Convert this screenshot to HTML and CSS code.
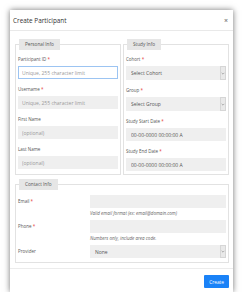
FILE: index.html
```html
<!DOCTYPE html>
<html lang="en">
<head>
  <meta charset="UTF-8" />
  <meta name="viewport" content="width=device-width, initial-scale=1" />
  <title>Create Participant</title>
  <link rel="stylesheet" href="styles.css">
</head>
<body>

<div class="modal">
  <div class="modal-header">
    <span class="modal-title">Create Participant</span>
    <span class="close">&times;</span>
  </div>

  <div class="modal-body">
    <div class="columns">
      <fieldset>
        <legend>Personal Info</legend>
        <div class="group">
          <label>Participant ID <span class="req">*</span></label>
          <input type="text" class="focused" placeholder="Unique, 255 character limit">
        </div>
        <div class="group">
          <label>Username <span class="req">*</span></label>
          <input type="text" placeholder="Unique, 255 character limit">
        </div>
        <div class="group">
          <label>First Name</label>
          <input type="text" placeholder="(optional)">
        </div>
        <div class="group">
          <label>Last Name</label>
          <input type="text" placeholder="(optional)">
        </div>
      </fieldset>

      <fieldset>
        <legend>Study Info</legend>
        <div class="group">
          <label>Cohort <span class="req">*</span></label>
          <div class="select wide">
            <select><option>Select Cohort</option></select>
            <span class="arrow"><svg viewBox="0 0 6 4" width="4" height="3"><path d="M1 1l2 2 2-2" fill="none" stroke="#777" stroke-width="0.8"/></svg></span>
          </div>
        </div>
        <div class="group">
          <label>Group <span class="req">*</span></label>
          <div class="select wide">
            <select><option>Select Group</option></select>
            <span class="arrow"><svg viewBox="0 0 6 4" width="4" height="3"><path d="M1 1l2 2 2-2" fill="none" stroke="#777" stroke-width="0.8"/></svg></span>
          </div>
        </div>
        <div class="group">
          <label>Study Start Date <span class="req">*</span></label>
          <input type="text" class="date" value="00-00-0000 00:00:00 A">
        </div>
        <div class="group">
          <label>Study End Date <span class="req">*</span></label>
          <input type="text" class="date" value="00-00-0000 00:00:00 A">
        </div>
      </fieldset>
    </div>

    <fieldset class="contact">
      <legend>Contact Info</legend>
      <div class="row">
        <label>Email <span class="req">*</span></label>
        <div>
          <input type="text">
          <div class="hint">Valid email format (ex: email@domain.com)</div>
        </div>
      </div>
      <div class="row">
        <label>Phone <span class="req">*</span></label>
        <div>
          <input type="text">
          <div class="hint">Numbers only, include area code.</div>
        </div>
      </div>
      <div class="row last">
        <label>Provider</label>
        <div class="select">
          <select><option>None</option></select>
          <span class="arrow"><svg viewBox="0 0 6 4" width="4" height="3"><path d="M1 1l2 2 2-2" fill="none" stroke="#777" stroke-width="0.8"/></svg></span>
        </div>
      </div>
    </fieldset>
  </div>

  <div class="modal-footer">
    <button class="create-btn">Create</button>
  </div>
</div>

</body>
</html>
```

FILE: styles.css
```css
* { box-sizing: border-box; }
body {
  margin: 0;
  background: #fff;
  font-family: 'Open Sans', sans-serif;
  color: #555;
}

.modal {
  width: 223px;
  margin: 10px 0 0 10px;
  background: #fff;
  box-shadow: 0 0 6px rgba(0, 0, 0, 0.55);
}

.modal-header {
  height: 21px;
  padding: 0 5px 0 3px;
  display: flex;
  align-items: center;
  justify-content: space-between;
  border-bottom: 1px solid #e9e9e9;
}

.modal-title {
  font-size: 6.4px;
  color: #333;
}

.close {
  font-size: 7px;
  font-weight: 700;
  color: #888;
}

.modal-body {
  padding: 8px 4px 5px 5px;
}

.columns {
  display: grid;
  grid-template-columns: 1fr 1fr;
  gap: 2px;
  margin-bottom: 4px;
}

fieldset {
  margin: 0;
  min-width: 0;
  border: 1px solid #e2e2e2;
  padding: 6px 2px 3px;
}

legend {
  margin-left: 1px;
  padding: 0 6px;
  height: 11px;
  line-height: 11px;
  font-size: 4.7px;
  background: #e6e6e6;
  color: #555;
}

.group { margin-bottom: 7px; }
.group:last-child { margin-bottom: 0; }

label {
  display: block;
  font-size: 4.5px;
  line-height: 7px;
  margin-bottom: 3px;
  color: #555;
}

.req { color: #e53935; }

input {
  display: block;
  width: 100%;
  height: 13px;
  padding: 0 3px;
  border: 1px solid #efefef;
  background: #efefef;
  font-family: 'Open Sans', sans-serif;
  font-size: 5px;
  color: #555;
  outline: none;
}

input::placeholder { color: #999; }

input.focused {
  background: #fff;
  border-color: #9cc4f2;
}

input.date { padding-left: 4px; }

.select {
  display: flex;
  height: 13px;
  background: #efefef;
}
.select.wide { height: 14px; }

select {
  flex: 1;
  min-width: 0;
  height: 100%;
  border: none;
  background: transparent;
  padding: 0 5px;
  font-family: 'Open Sans', sans-serif;
  font-size: 5px;
  color: #555;
  appearance: none;
  -webkit-appearance: none;
}

.arrow {
  width: 6px;
  display: flex;
  align-items: center;
  justify-content: center;
  border: 1px solid #d6d6d6;
  background: #e9e9e9;
}

.contact { padding: 5px 2px 4px; }

.row {
  display: grid;
  grid-template-columns: 72px 1fr;
  margin-bottom: 3px;
}
.row.last { margin-bottom: 0; }

.row label {
  line-height: 13px;
  margin: 0;
}

.hint {
  margin-top: 2px;
  line-height: 7px;
  font-size: 4.5px;
  font-style: italic;
  color: #666;
}

.modal-footer {
  border-top: 1px solid #ececec;
  padding: 6px 4px 4px;
  display: flex;
  justify-content: flex-end;
}

.create-btn {
  height: 13px;
  padding: 0 5px;
  border: none;
  border-radius: 1px;
  background: #1a82f7;
  color: #fff;
  font-family: 'Open Sans', sans-serif;
  font-size: 4.8px;
}
```
